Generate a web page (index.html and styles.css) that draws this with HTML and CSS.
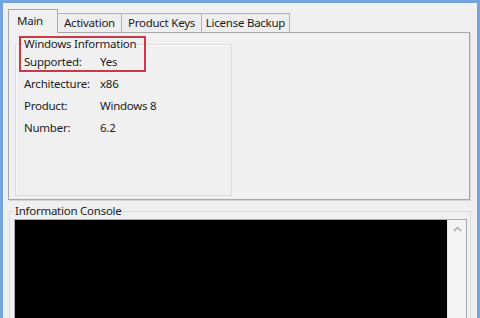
FILE: index.html
```html
<!DOCTYPE html>
<html>
<head>
<meta charset="utf-8">
<link rel="stylesheet" href="styles.css">
</head>
<body>
<div class="frame">
  <div class="client">
    <div class="tabs">
      <div class="tab active tab-main">Main</div>
      <div class="tab tab-act">Activation</div>
      <div class="tab tab-keys">Product Keys</div>
      <div class="tab tab-lic">License Backup</div>
    </div>
    <div class="panel">
      <fieldset class="group">
        <legend>Windows Information</legend>
        <div class="row"><span class="key">Supported:</span><span>Yes</span></div>
        <div class="row"><span class="key">Architecture:</span><span>x86</span></div>
        <div class="row"><span class="key">Product:</span><span>Windows 8</span></div>
        <div class="row"><span class="key">Number:</span><span>6.2</span></div>
      </fieldset>
      <div class="highlight"></div>
    </div>
    <fieldset class="console-group">
      <legend>Information Console</legend>
      <div class="textbox">
        <div class="console"></div>
        <div class="scrollbar">
          <svg class="arrow" width="9" height="6" viewBox="0 0 9 6"><polyline points="1,5 4.5,1.5 8,5" fill="none" stroke="#a6a6a6" stroke-width="1.4"/></svg>
        </div>
      </div>
    </fieldset>
  </div>
</div>
</body>
</html>
```

FILE: styles.css
```css
* { box-sizing: border-box; }
html, body { margin: 0; padding: 0; }
body {
  width: 480px;
  height: 318px;
  overflow: hidden;
  background: #74a3df;
  font-family: "Noto Sans", "Open Sans", sans-serif;
  font-size: 11.5px;
  letter-spacing: -0.25px;
  color: #1b1b1b;
}
.frame {
  padding: 3px 3px 0 3px;
  height: 318px;
}
.client {
  background: #f0f0f0;
  height: 315px;
  padding: 6px 0 0 5px;
  overflow: hidden;
}
.tabs {
  display: flex;
  align-items: flex-end;
  height: 23px;
}
.tab {
  height: 19px;
  line-height: 17px;
  border: 1px solid #b4b4b4;
  border-bottom: none;
  background: #eeeeee;
  margin-left: -1px;
  text-align: center;
  white-space: nowrap;
}
.tab.active {
  height: 24px;
  line-height: 21px;
  margin-bottom: -1px;
  margin-left: 0;
  background: #f0f0f0;
  border-color: #a8a8a8;
  position: relative;
  z-index: 1;
  text-align: left;
  padding-left: 8px;
}
.tab-main { width: 50px; }
.tab-act { width: 65px; }
.tab-keys { width: 81px; }
.tab-lic { width: 89px; }

.panel {
  position: relative;
  width: 462px;
  height: 168px;
  border: 1px solid #a8a8a8;
  box-shadow: 1px 1px 0 #d4d4d4;
  background: #f0f0f0;
  padding: 3px 0 0 6px;
}
.group {
  margin: 0;
  width: 217px;
  height: 160px;
  border: 1px solid #dcdcdc;
  box-shadow: inset 1px 1px 0 #fafafa;
  padding: 0 0 0 8px;
}
.group legend {
  padding: 0;
  line-height: 16px;
}
.row {
  display: flex;
  line-height: 22px;
}
.row:first-of-type { margin-top: -1px; }
.key { width: 76px; }
.highlight {
  position: absolute;
  left: 10px;
  top: 3px;
  width: 127px;
  height: 36px;
  border: 2px solid #c93a48;
}
.console-group {
  margin: 3px 0 0 1px;
  width: 462px;
  height: 140px;
  border: 1px solid #dcdcdc;
  border-bottom: none;
  padding: 0 0 0 4px;
}
.console-group legend {
  padding: 0 0 0 1px;
  line-height: 16px;
}
.textbox {
  display: flex;
  width: 453px;
  height: 120px;
  border: 1px solid #a9abb2;
  border-bottom: none;
}
.console {
  width: 432px;
  background: #000;
}
.scrollbar {
  width: 19px;
  background: #f3f3f3;
  border-left: 1px solid #e6e6e6;
  display: flex;
  justify-content: center;
  padding-top: 6px;
}
.arrow { display: block; }
```
